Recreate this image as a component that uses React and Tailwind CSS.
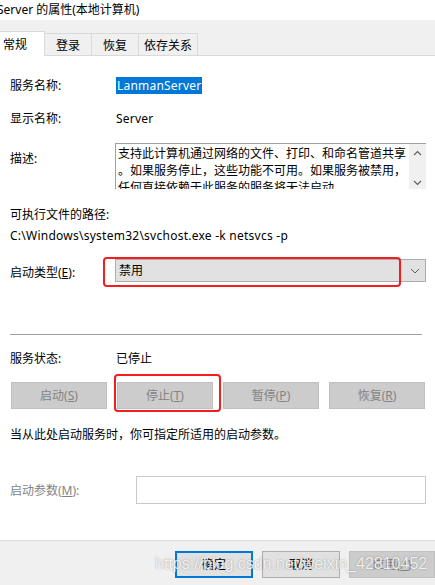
import React from "react";

const F = { fontFamily: '"Segoe UI", "Noto Sans", "Noto Sans CJK SC", sans-serif' };

function Tab({ children, active, w }) {
  if (active) {
    return (
      <div className={`h-[25px] ${w} bg-white border-r border-t border-[#d9d9d9] flex items-start pl-[3px] pt-[4px] -mb-px relative z-10`}>
        <span className="text-[12px] leading-[17px] text-black">{children}</span>
      </div>
    );
  }
  return (
    <div className={`h-[22px] ${w} bg-[#f0f0f0] border-r border-t border-[#d9d9d9] flex items-start justify-center pt-[3px]`}>
      <span className="text-[12px] leading-[17px] text-black">{children}</span>
    </div>
  );
}

function Btn({ children, w }) {
  return (
    <div className={`h-[27px] ${w} bg-[#cccccc] border border-[#bfbfbf] flex items-center justify-center text-[12px] text-[#838383]`}>
      {children}
    </div>
  );
}

export default function App() {
  return (
    <div className="w-[435px] h-[585px] bg-white overflow-hidden flex flex-col text-black relative" style={F}>
      {/* title */}
      <div className="h-[20px] bg-white flex items-center">
        <span className="ml-[-3px] text-[12px] leading-[16px]">Server 的属性(本地计算机)</span>
      </div>
      {/* tabs band */}
      <div className="h-[36px] bg-[#f0f0f0] flex items-end border-b border-[#d9d9d9]">
        <Tab active w="w-[45px]">常规</Tab>
        <Tab w="w-[47px]">登录</Tab>
        <Tab w="w-[47px]">恢复</Tab>
        <Tab w="w-[59px]">依存关系</Tab>
      </div>
      {/* content */}
      <div className="flex-1 bg-white pl-[10px] pr-[9px] text-[12px] leading-[17px]">
        <div className="mt-[21px] flex items-center h-[17px]">
          <span className="w-[106px]">服务名称:</span>
          <span className="bg-[#0078d7] text-white px-[1px] h-[17px] tracking-[0.2px]">LanmanServer</span>
        </div>
        <div className="mt-[16px] flex items-center h-[17px]">
          <span className="w-[106px]">显示名称:</span>
          <span className="tracking-[0.2px]">Server</span>
        </div>
        <div className="mt-[16px] flex">
          <span className="w-[105px] pt-[7px]">描述:</span>
          <div className="flex-1 h-[46px] border-l border-t border-[#a0a0a0] flex overflow-hidden">
            <div className="flex-1 pl-[2px] pt-[1px] overflow-hidden">
              <div className="whitespace-nowrap">支持此计算机通过网络的文件、打印、和命名管道共享</div>
              <div className="whitespace-nowrap">。如果服务停止，这些功能不可用。如果服务被禁用，</div>
              <div className="whitespace-nowrap">任何直接依赖于此服务的服务将无法启动。</div>
            </div>
            <div className="w-[17px] bg-[#f0f0f0] flex flex-col items-center justify-between pt-[6px] pb-[3px]">
              <svg width="9" height="6" viewBox="0 0 9 6"><path d="M1 5 L4.5 1.5 L8 5" fill="none" stroke="#606060" strokeWidth="1.2" /></svg>
              <svg width="9" height="6" viewBox="0 0 9 6"><path d="M1 1 L4.5 4.5 L8 1" fill="none" stroke="#606060" strokeWidth="1.2" /></svg>
            </div>
          </div>
        </div>
        <div className="mt-[17px]">可执行文件的路径:</div>
        <div className="mt-[4px] tracking-[0.25px]">C:\Windows\system32\svchost.exe -k netsvcs -p</div>
        <div className="mt-[15px] flex items-center">
          <span className="w-[105px] pt-[3px]">启动类型(<span className="underline">E</span>):</span>
          <div className="relative flex-1 h-[23px] bg-[#e1e1e1] border border-[#adadad] flex items-center pl-[3px] pr-[5px]">
            <span className="flex-1">禁用</span>
            <svg width="10" height="6" viewBox="0 0 10 6"><path d="M1 1 L5 5 L9 1" fill="none" stroke="#606060" strokeWidth="1" /></svg>
            <div className="absolute left-[-13px] top-[-3px] w-[298px] h-[30px] border-2 border-[#f41c1c] rounded-[4px]" />
          </div>
        </div>
        <div className="mt-[52px] h-px bg-[#a0a0a0] mr-[4px]" />
        <div className="mt-[15px] flex items-center h-[17px]">
          <span className="w-[106px]">服务状态:</span>
          <span>已停止</span>
        </div>
        <div className="mt-[15px] flex items-center gap-[10px] pl-px">
          <Btn w="w-[96px]">启动(<span className="underline">S</span>)</Btn>
          <div className="relative">
            <Btn w="w-[96px]">停止(<span className="underline">T</span>)</Btn>
            <div className="absolute left-[-3px] top-[-8px] w-[107px] h-[38px] border-2 border-[#f41c1c] rounded-[4px]" />
          </div>
          <Btn w="w-[96px]">暂停(<span className="underline">P</span>)</Btn>
          <Btn w="w-[96px]">恢复(<span className="underline">R</span>)</Btn>
        </div>
        <div className="mt-[17px]">当从此处启动服务时，你可指定所适用的启动参数。</div>
        <div className="mt-[33px] flex items-center">
          <span className="w-[126px] text-[#838383]">启动参数(<span className="underline">M</span>):</span>
          <div className="flex-1 h-[28px] border border-[#c8c8c8] bg-white" />
        </div>
      </div>
      {/* footer */}
      <div className="h-[45px] bg-[#f0f0f0] border-t border-[#dcdcdc] flex items-start pt-[10px] pl-[175px] gap-[9px] text-[12px]">
        <div className="w-[86px] h-[27px] bg-[#e1e1e1] border-2 border-[#0078d7] flex items-center justify-center">确定</div>
        <div className="w-[86px] h-[27px] bg-[#e1e1e1] border border-[#adadad] flex items-center justify-center">取消</div>
        <div className="w-[86px] h-[27px] shrink-0 bg-[#cccccc] border border-[#bfbfbf] flex items-center justify-center text-[#838383]">应用(<span className="underline">A</span>)</div>
      </div>
      <div
        className="absolute left-[155px] top-[554px] text-[16px] leading-[20px] text-white/85 whitespace-nowrap pointer-events-none"
        style={{ fontFamily: '"Liberation Sans", Arial, sans-serif', textShadow: "0 0 1.5px rgba(60,60,60,0.55)" }}
      >
        https://blog.csdn.net/weixin_42810452
      </div>
    </div>
  );
}
